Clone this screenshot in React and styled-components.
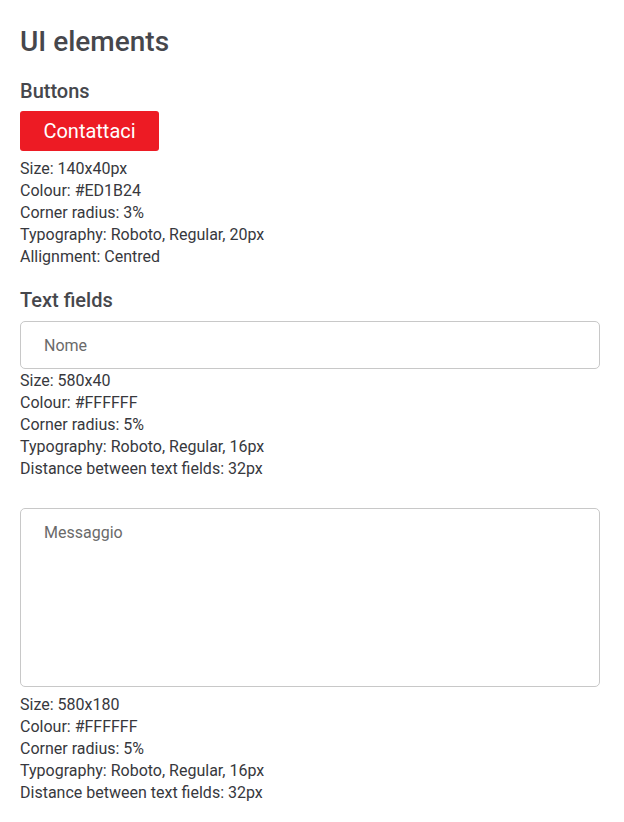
import React from 'react';
import styled, { createGlobalStyle } from 'styled-components';

const GlobalStyle = createGlobalStyle`
  body {
    margin: 0;
    background: #ffffff;
    font-family: Roboto, 'Liberation Sans', sans-serif;
    color: #46474c;
  }
`;

const Page = styled.div`
  padding: 26px 24px 20px 20px;
  display: flex;
  flex-direction: column;
`;

const Title = styled.h1`
  margin: 0 0 21px;
  font-size: 28px;
  line-height: 32px;
  font-weight: 500;
`;

const SectionTitle = styled.h2`
  margin: 0 0 ${props => props.gap || 8}px;
  font-size: 20px;
  line-height: 24px;
  font-weight: 500;
`;

const Section = styled.section`
  display: flex;
  flex-direction: column;
  margin-bottom: ${props => props.after || 0}px;
`;

const Button = styled.button`
  width: 139px;
  height: 40px;
  border: none;
  border-radius: 3px;
  background: #ed1b24;
  color: #ffffff;
  font-family: Roboto, 'Liberation Sans', sans-serif;
  font-size: 20px;
  font-weight: 400;
  padding: 0;
  cursor: pointer;
`;

const Specs = styled.div`
  margin-top: ${props => props.top || 0}px;
  display: flex;
  flex-direction: column;
`;

const Spec = styled.div`
  font-size: 16px;
  line-height: 22px;
  font-weight: 400;
  color: #37383d;
`;

const Field = styled.input`
  box-sizing: border-box;
  width: 580px;
  height: 48px;
  border: 1px solid #c8c8c8;
  border-radius: 5px;
  padding: 0 23px;
  font-family: Roboto, 'Liberation Sans', sans-serif;
  font-size: 16px;
  color: #444;
  outline: none;
  &::placeholder { color: #6a6a6a; }
`;

const Area = styled.textarea`
  box-sizing: border-box;
  width: 580px;
  height: 179px;
  border: 1px solid #c8c8c8;
  border-radius: 5px;
  padding: 14px 23px;
  font-family: Roboto, 'Liberation Sans', sans-serif;
  font-size: 16px;
  line-height: 20px;
  color: #444;
  resize: none;
  outline: none;
  display: block;
  &::placeholder { color: #6a6a6a; }
`;

const SpecList = ({ items, top }) => (
  <Specs top={top}>
    {items.map(s => <Spec key={s}>{s}</Spec>)}
  </Specs>
);

const fieldSpecs = size => [
  `Size: ${size}`,
  'Colour: #FFFFFF',
  'Corner radius: 5%',
  'Typography: Roboto, Regular, 16px',
  'Distance between text fields: 32px',
];

export default function App() {
  return (
    <>
      <GlobalStyle />
      <Page>
        <Title>UI elements</Title>
        <Section after={20}>
          <SectionTitle gap={8}>Buttons</SectionTitle>
          <Button>Contattaci</Button>
          <SpecList top={7} items={[
            'Size: 140x40px',
            'Colour: #ED1B24',
            'Corner radius: 3%',
            'Typography: Roboto, Regular, 20px',
            'Allignment: Centred',
          ]} />
        </Section>
        <Section after={28}>
          <SectionTitle gap={9}>Text fields</SectionTitle>
          <Field placeholder="Nome" />
          <SpecList top={1} items={fieldSpecs('580x40')} />
        </Section>
        <Section>
          <Area placeholder="Messaggio" />
          <SpecList top={7} items={fieldSpecs('580x180')} />
        </Section>
      </Page>
    </>
  );
}
